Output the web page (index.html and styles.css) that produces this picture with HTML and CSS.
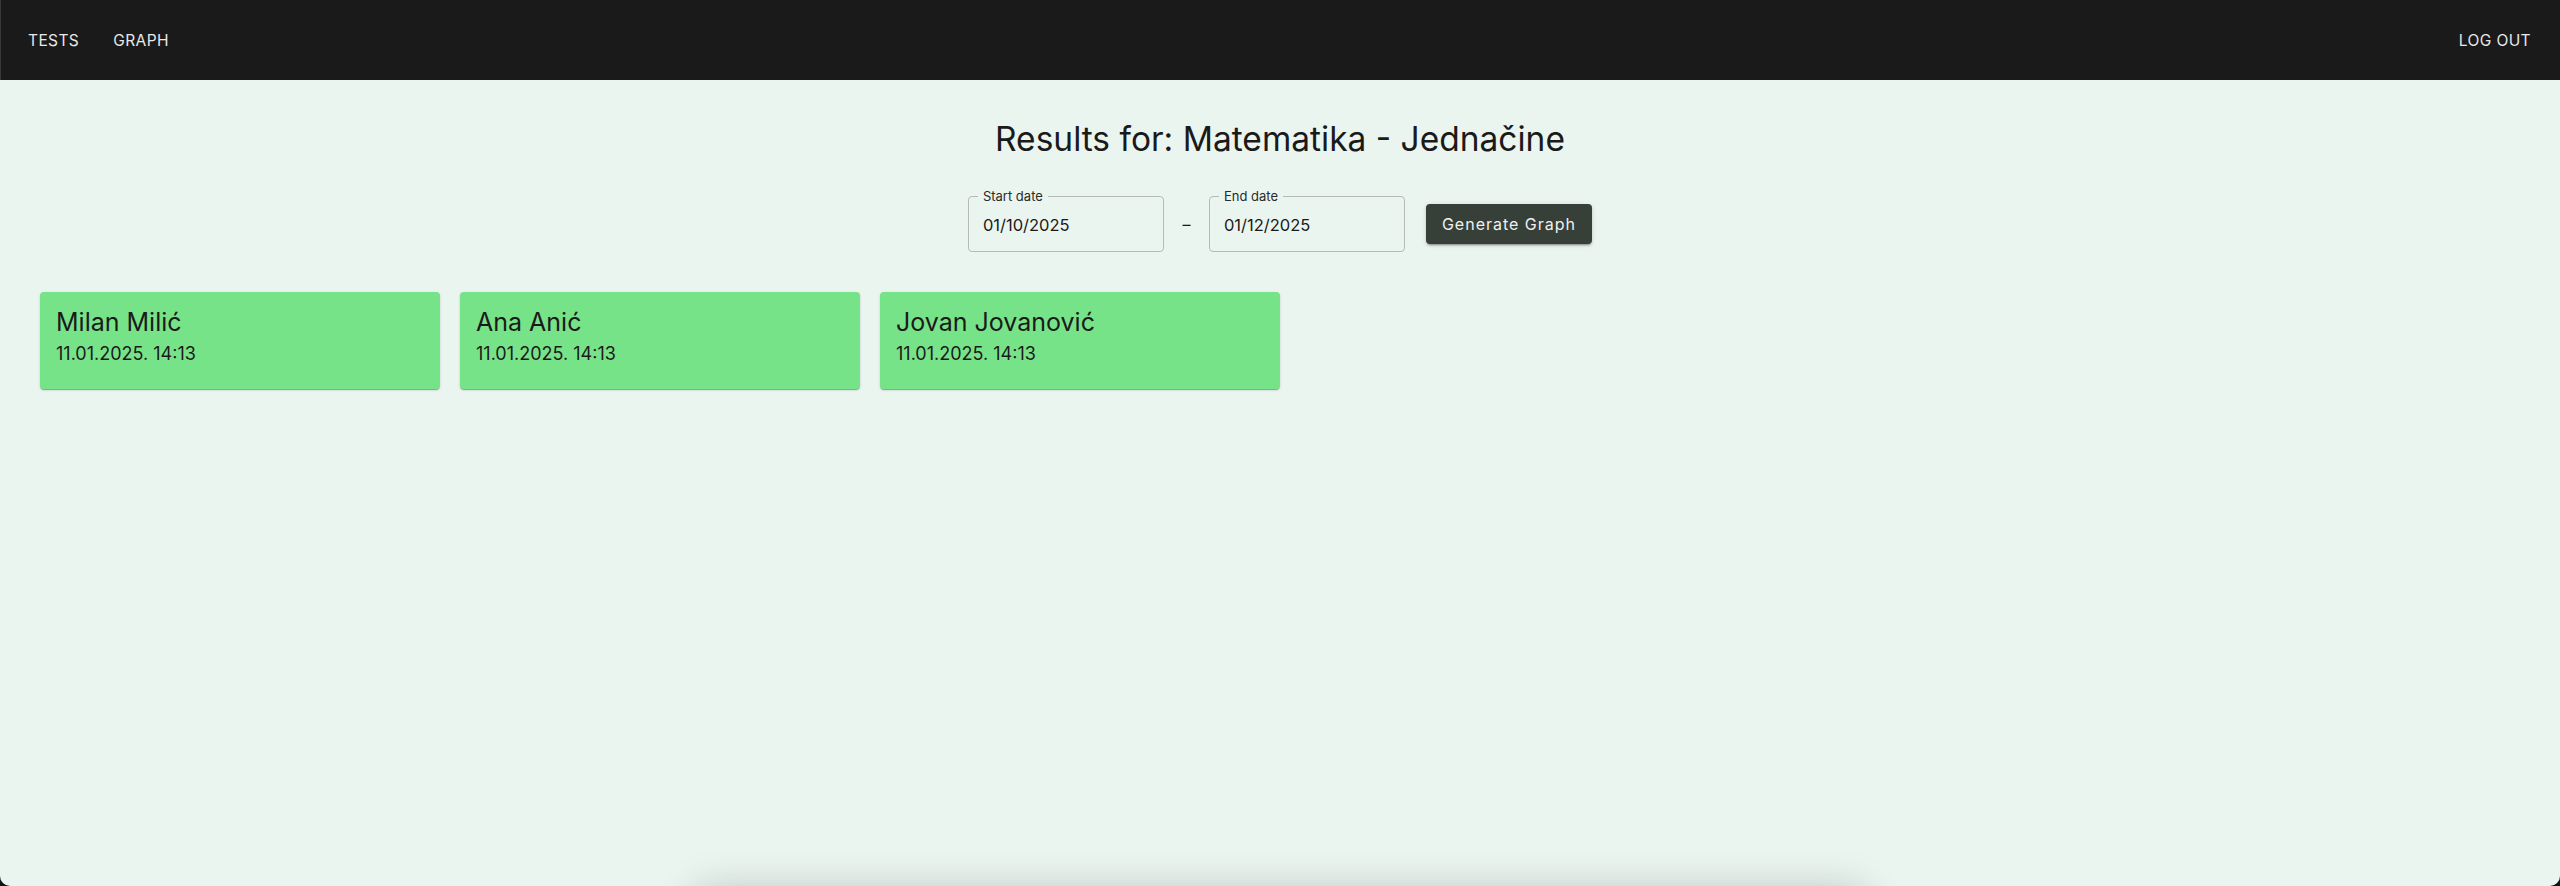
FILE: index.html
```html
<!DOCTYPE html>
<html lang="sr">
<head>
<meta charset="utf-8">
<title>Results</title>
<link rel="stylesheet" href="styles.css">
</head>
<body>
<div class="app">
  <header class="navbar">
    <nav class="nav-left">
      <a class="nav-link">TESTS</a>
      <a class="nav-link">GRAPH</a>
    </nav>
    <a class="nav-link">LOG OUT</a>
  </header>
  <main class="main">
    <h1 class="title">Results for: Matematika - Jednačine</h1>
    <div class="date-row">
      <div class="field">
        <span class="field-label">Start date</span>
        <span class="field-value">01/10/2025</span>
      </div>
      <span class="dash">–</span>
      <div class="field">
        <span class="field-label">End date</span>
        <span class="field-value">01/12/2025</span>
      </div>
      <button class="gen-btn">Generate Graph</button>
    </div>
    <div class="cards">
      <div class="card">
        <div class="card-name">Milan Milić</div>
        <div class="card-date">11.01.2025. 14:13</div>
      </div>
      <div class="card">
        <div class="card-name">Ana Anić</div>
        <div class="card-date">11.01.2025. 14:13</div>
      </div>
      <div class="card">
        <div class="card-name">Jovan Jovanović</div>
        <div class="card-date">11.01.2025. 14:13</div>
      </div>
    </div>
    <div class="chart-box"></div>
  </main>
</div>
</body>
</html>
```

FILE: styles.css
```css
* { box-sizing: border-box; }
html, body { margin: 0; padding: 0; }
body {
  background: #0f1417;
  font-family: "Inter", "Open Sans", sans-serif;
  color: #1a1a1a;
}
.app {
  height: 100vh;
  overflow: hidden;
  background: #ebf5ef;
  border-radius: 0 0 10px 10px;
  display: flex;
  flex-direction: column;
}
.navbar {
  height: 80px;
  flex: none;
  background: #1a1a1a;
  border-left: 1px solid #3a3a3a;
  display: flex;
  align-items: center;
  justify-content: space-between;
  padding: 0 29px 0 27px;
}
.nav-left {
  display: flex;
  gap: 34px;
}
.nav-link {
  color: #e8e8e8;
  font-size: 15.5px;
  font-weight: 400;
  letter-spacing: 0.4px;
  cursor: pointer;
}
.main {
  display: flex;
  flex-direction: column;
  align-items: center;
}
.title {
  margin: 38px 0 0;
  font-size: 33.5px;
  font-weight: 400;
  line-height: 42px;
  color: #1a1a1a;
}
.date-row {
  margin-top: 36px;
  display: flex;
  align-items: center;
}
.field {
  position: relative;
  width: 196px;
  height: 56px;
  border: 1px solid #b5bbb7;
  border-radius: 4px;
  display: flex;
  align-items: center;
  padding: 0 14px;
}
.field-label {
  position: absolute;
  left: 9px;
  top: -8px;
  padding: 0 5px;
  background: #ebf5ef;
  font-size: 13px;
  line-height: 14px;
  color: #2a2a2a;
}
.field-value {
  font-size: 16.5px;
  color: #1a1a1a;
  margin-top: 1px;
}
.dash {
  width: 45px;
  text-align: center;
  font-size: 16px;
  color: #1a1a1a;
}
.gen-btn {
  margin-left: 21px;
  height: 40px;
  padding: 0 16px;
  background: #363f38;
  color: #f0f0f0;
  border: none;
  border-radius: 4px;
  font-family: inherit;
  font-size: 16px;
  letter-spacing: 1px;
  box-shadow: 0 3px 1px -2px rgba(0,0,0,0.2), 0 2px 2px 0 rgba(0,0,0,0.14), 0 1px 5px 0 rgba(0,0,0,0.12);
}
.cards {
  align-self: stretch;
  margin-top: 40px;
  padding: 0 40px;
  display: flex;
  gap: 20px;
}
.card {
  width: 400px;
  height: 97px;
  background: #77e388;
  border-radius: 4px;
  padding: 14px 16px;
  box-shadow: 0 2px 1px -1px rgba(0,0,0,0.2), 0 1px 1px 0 rgba(0,0,0,0.14), 0 1px 3px 0 rgba(0,0,0,0.12);
}
.card-name {
  font-size: 25px;
  line-height: 32px;
  color: #1a1a1a;
}
.card-date {
  font-size: 18px;
  font-weight: 400;
  line-height: 28px;
  color: #1a1a1a;
  margin-top: 2px;
}
.chart-box {
  margin-top: 502px;
  width: 1170px;
  height: 400px;
  flex: none;
  background: #ebf5ef;
  border-radius: 10px;
  box-shadow: 0 0 40px rgba(0,0,0,0.22);
}
```
